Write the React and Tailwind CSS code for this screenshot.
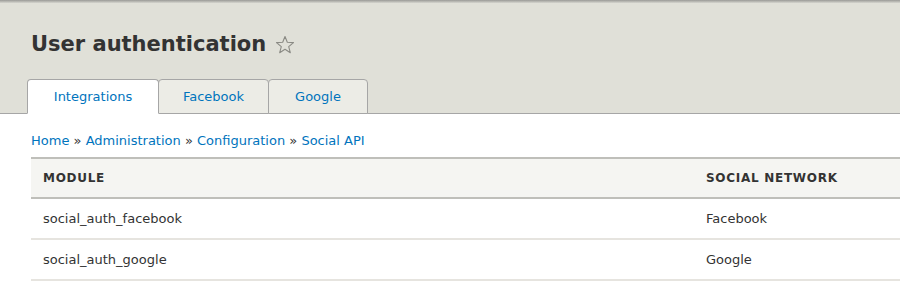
import React from 'react'

const font = { fontFamily: '"DejaVu Sans", sans-serif' }

function Star() {
  return (
    <svg width="20" height="20" viewBox="0 0 20 20" className="ml-[9px] mt-[2px]">
      <path
        d="M10 1.5 L12.3 7.3 L18.5 7.6 L13.7 11.6 L15.3 17.7 L10 14.3 L4.7 17.7 L6.3 11.6 L1.5 7.6 L7.7 7.3 Z"
        fill="none"
        stroke="#8a8a84"
        strokeWidth="1.1"
        strokeLinejoin="round"
      />
    </svg>
  )
}

export default function App() {
  const tabs = [
    { label: 'Integrations', w: 'w-[132px]', active: true },
    { label: 'Facebook', w: 'w-[111px]' },
    { label: 'Google', w: 'w-[100px]' }
  ]
  const rows = [
    ['social_auth_facebook', 'Facebook'],
    ['social_auth_google', 'Google']
  ]

  return (
    <div style={font} className="w-[900px] h-[306px] overflow-hidden bg-white text-[#333]">
      <div className="bg-[#e0e0d8] border-b border-[#a6a6a6] relative">
        <div className="h-[3px] bg-gradient-to-b from-[#9a9a96] to-[#d6d6cf]" />
        <div className="pl-[31px] pt-[27px] flex items-center h-[55px]">
          <h1 className="text-[21px] font-bold leading-none text-[#333]">User authentication</h1>
          <Star />
        </div>
        <div className="flex pl-[27px] pt-[21px] -mb-px">
          {tabs.map(t => (
            <div
              key={t.label}
              className={`${t.w} h-[35px] flex items-center justify-center text-[13px] text-[#0074bd] border border-[#a6a6a6] -ml-px first:ml-0 rounded-t-[4px] ${t.active ? 'bg-white border-b-white relative z-10' : 'bg-[#ecece6]'}`}
            >
              {t.label}
            </div>
          ))}
        </div>
      </div>
      <div className="pl-[31px]">
        <div className="pt-[19px] pb-[8px] text-[13px] leading-[16px] text-[#0074bd]">
          Home <span className="text-[#333]">»</span> Administration <span className="text-[#333]">»</span> Configuration <span className="text-[#333]">»</span> Social API
        </div>
        <table className="w-[1000px] text-[13px] text-left border-collapse">
          <thead>
            <tr className="bg-[#f5f5f2] border-t-2 border-b-2 border-[#bfbfba]">
              <th className="w-[663px] h-[40px] px-3 text-[12px] font-bold uppercase tracking-[0.06em]">Module</th>
              <th className="px-3 text-[12px] font-bold uppercase tracking-[0.06em]">Social network</th>
            </tr>
          </thead>
          <tbody>
            {rows.map(r => (
              <tr key={r[0]} className="border-b-2 border-[#e6e4df]">
                <td className="h-[41px] px-3">{r[0]}</td>
                <td className="px-3">{r[1]}</td>
              </tr>
            ))}
          </tbody>
        </table>
      </div>
    </div>
  )
}
